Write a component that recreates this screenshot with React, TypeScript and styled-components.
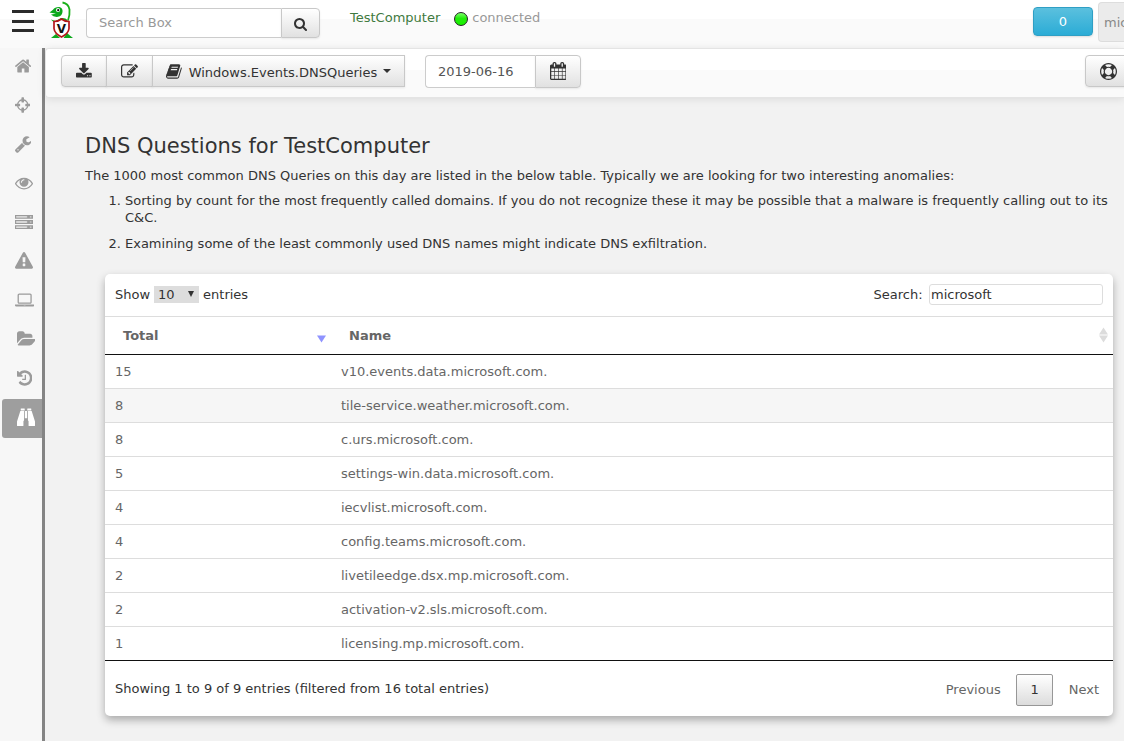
import React from "react";
import styled, { createGlobalStyle, css } from "styled-components";

const Global = createGlobalStyle`
  * { box-sizing: border-box; }
  html, body { margin: 0; padding: 0; background: #f2f2f2; overflow: hidden; }
  body { font: 13px/17px "DejaVu Sans", sans-serif; color: #333; }
`;

type GlyphData = { box: [number, number]; d: string };

/* Each glyph is drawn on a 1792-unit em; box is [left edge, width]. */
const glyphs: Record<string, GlyphData> = {
  home: { box: [90, 1612], d: "M1472 992v480q0 26-19 45t-45 19h-384v-384h-256v384h-384q-26 0-45-19t-19-45v-480q0-1 .5-3t.5-3l575-474 575 474q1 2 1 6zm223-69l-62 74q-8 9-21 11h-3q-13 0-21-7l-692-577-692 577q-12 8-24 7-13-2-21-11l-62-74q-8-10-7-23.5t11-21.5l719-599q32-26 76-26t76 26l244 204v-195q0-14 9-23t23-9h192q14 0 23 9t9 23v408l219 182q10 8 11 21.5t-7 23.5z" },
  crosshairs: { box: [128, 1536], d: "M1325 1024h-109q-26 0-45-19t-19-45v-128q0-26 19-45t45-19h109q-32-108-112.5-188.5t-188.5-112.5v109q0 26-19 45t-45 19h-128q-26 0-45-19t-19-45v-109q-108 32-188.5 112.5t-112.5 188.5h109q26 0 45 19t19 45v128q0 26-19 45t-45 19h-109q32 108 112.5 188.5t188.5 112.5v-109q0-26 19-45t45-19h128q26 0 45 19t19 45v109q108-32 188.5-112.5t112.5-188.5zm339-192v128q0 26-19 45t-45 19h-143q-37 161-154.5 278.5t-278.5 154.5v143q0 26-19 45t-45 19h-128q-26 0-45-19t-19-45v-143q-161-37-278.5-154.5t-154.5-278.5h-143q-26 0-45-19t-19-45v-128q0-26 19-45t45-19h143q37-161 154.5-278.5t278.5-154.5v-143q0-26 19-45t45-19h128q26 0 45 19t19 45v143q161 37 278.5 154.5t154.5 278.5h143q26 0 45 19t19 45z" },
  wrench: { box: [85, 1641], d: "M448 1472q0-26-19-45t-45-19-45 19-19 45 19 45 45 19 45-19 19-45zm644-420l-682 682q-37 37-90 37-52 0-91-37l-106-108q-38-36-38-90 0-53 38-91l681-681q39 98 114.5 173.5t173.5 114.5zm634-435q0 39-23 106-47 134-164.5 217.5t-258.5 83.5q-185 0-316.5-131.5t-131.5-316.5 131.5-316.5 316.5-131.5q58 0 121.5 16.5t107.5 46.5q16 11 16 28t-16 28l-293 169v224l193 107q5-3 79-48.5t135.5-81 70.5-35.5q15 0 23.5 10t8.5 25z" },
  eye: { box: [0, 1792], d: "M1664 960q-152-236-381-353 61 104 61 225 0 185-131.5 316.5t-316.5 131.5-316.5-131.5-131.5-316.5q0-121 61-225-229 117-381 353 133 205 333.5 326.5t434.5 121.5 434.5-121.5 333.5-326.5zm-720-384q0-20-14-34t-34-14q-125 0-214.5 89.5t-89.5 214.5q0 20 14 34t34 14 34-14 14-34q0-86 61-147t147-61q20 0 34-14t14-34zm848 384q0 34-20 69-140 230-376.5 368.5t-499.5 138.5-499.5-139-376.5-368q-20-35-20-69t20-69q140-229 376.5-368t499.5-139 499.5 139 376.5 368q20 35 20 69z" },
  server: { box: [0, 1792], d: "M0 192h1792v384H0zM128 336v96h1024v-96zM0 704h1792v384H0zM128 848v96h1024v-96zM0 1216h1792v384H0zM128 1360v96h1024v-96z" },
  warning: { box: [0, 1792], d: "M1024 1375v-190q0-14-9.5-23.5t-22.5-9.5h-192q-13 0-22.5 9.5t-9.5 23.5v190q0 14 9.5 23.5t22.5 9.5h192q13 0 22.5-9.5t9.5-23.5zm-2-374l18-459q0-12-10-19-13-11-24-11h-220q-11 0-24 11-10 7-10 21l17 457q0 10 10 16.5t24 6.5h185q14 0 23.5-6.5t10.5-16.5zm-14-934l768 1408q35 63-2 126-17 29-46.5 46t-63.5 17h-1536q-34 0-63.5-17t-46.5-46q-37-63-2-126l768-1408q17-31 47-49t65-18 65 18 47 49z" },
  laptop: { box: [0, 1920], d: "M416 1280q-66 0-113-47t-47-113v-704q0-66 47-113t113-47h1088q66 0 113 47t47 113v704q0 66-47 113t-113 47h-1088zm-32-864v704q0 13 9.5 22.5t22.5 9.5h1088q13 0 22.5-9.5t9.5-22.5v-704q0-13-9.5-22.5t-22.5-9.5h-1088q-13 0-22.5 9.5t-9.5 22.5zm1376 928h160v96q0 40-47 68t-113 28h-1600q-66 0-113-28t-47-68v-96h1760zm-720 96q16 0 16-16t-16-16h-160q-16 0-16 16t16 16h160z" },
  folder: { box: [0, 1880], d: "M1879 952q0 31-31 66l-336 396q-43 51-120.5 86.5t-143.5 35.5h-1088q-34 0-60.5-13t-26.5-43q0-31 31-66l336-396q43-51 120.5-86.5t143.5-35.5h1088q34 0 60.5 13t26.5 43zm-343-344v160h-832q-94 0-197 47.5t-164 119.5l-337 396-5 6q0-4-.5-12.5t-.5-12.5v-960q0-92 66-158t158-66h320q92 0 158 66t66 158v32h544q92 0 158 66t66 158z" },
  history: { box: [128, 1536], d: "M1664 896q0 156-61 298t-164 245-245 164-298 61q-172 0-327-72.5t-264-204.5q-7-10-6.5-22.5t8.5-20.5l137-138q10-9 25-9 16 2 23 12 73 95 179 147t225 52q104 0 198.5-40.5t163.5-109.5 109.5-163.5 40.5-198.5-40.5-198.5-109.5-163.5-163.5-109.5-198.5-40.5q-98 0-188 35.5t-160 101.5l137 138q31 30 14 69-17 40-59 40h-448q-26 0-45-19t-19-45v-448q0-42 40-59 39-17 69 14l130 129q107-101 244.5-156.5t284.5-55.5q156 0 298 61t245 164 164 245 61 298zm-640-288v448q0 14-9 23t-23 9h-320q-14 0-23-9t-9-23v-64q0-14 9-23t23-9h224v-352q0-14 9-23t23-9h64q14 0 23 9t9 23z" },
  binoculars: { box: [0, 1792], d: "M400 40h340q28 0 28 28v176H372V68q0-28 28-28zM1052 40h340q28 0 28 28v176h-396V68q0-28 28-28zM330 310h374v910q0 36-36 60l-28 40v420q0 52-52 52H52q-52 0-52-52v-400zM1088 310h374l330 1030v400q0 52-52 52h-536q-52 0-52-52v-420l-28-40q-36-24-36-60zM784 310h224v720H784z" },
  download: { box: [64, 1664], d: "M1344 1344q0-26-19-45t-45-19-45 19-19 45 19 45 45 19 45-19 19-45zm256 0q0-26-19-45t-45-19-45 19-19 45 19 45 45 19 45-19 19-45zm128-224v320q0 40-28 68t-68 28h-1472q-40 0-68-28t-28-68v-320q0-40 28-68t68-28h465l135 136q58 56 136 56t136-56l136-136h464q40 0 68 28t28 68zm-325-569q17 41-14 70l-448 448q-18 19-45 19t-45-19l-448-448q-31-29-14-70 17-39 59-39h256v-448q0-26 19-45t45-19h256q26 0 45 19t19 45v448h256q42 0 59 39z" },
  edit: { box: [0, 1784], d: "M888 1184l116-116-152-152-116 116v56h96v96h56zm440-720q-16-16-33 1l-350 350q-17 17-1 33t33-1l350-350q17-17 1-33zm80 594v190q0 119-84.5 203.5t-203.5 84.5h-832q-119 0-203.5-84.5t-84.5-203.5v-832q0-119 84.5-203.5t203.5-84.5h832q63 0 117 25 15 7 18 23 3 17-9 29l-49 49q-14 14-32 8-23-6-45-6h-832q-66 0-113 47t-47 113v832q0 66 47 113t113 47h832q66 0 113-47t47-113v-126q0-13 9-22l64-64q15-15 35-7t20 29zm-96-738l288 288-672 672h-288v-288zm444 132l-92 92-288-288 92-92q28-28 68-28t68 28l152 152q28 28 28 68t-28 68z" },
  book: { box: [64, 1670], d: "M1703 478q40 57 18 129l-275 906q-19 64-76.5 107.5t-122.5 43.5h-923q-77 0-148.5-53.5t-99.5-131.5q-24-67-2-127 0-4 3-27t4-37q1-8-3-21.5t-3-19.5q2-11 8-21t16.5-23.5 16.5-23.5q23-38 45-91.5t30-91.5q3-10 .5-30t-.5-28q3-11 17-28t17-23q21-36 42-92t25-90q1-9-2.5-32t.5-28q4-13 22-30.5t22-22.5q19-26 42.5-84.5t27.5-96.5q1-8-3-25.5t-2-26.5q2-8 9-18t18-23 17-21q8-12 16.5-30.5t15-35 16-36 19.5-32 26.5-23.5 36-11.5 47.5 5.5l-1 3q38-9 51-9h761q74 0 114 56t18 130l-274 906q-36 119-71.5 153.5t-128.5 34.5h-869q-27 0-38 15-11 16-1 43 24 70 144 70h923q29 0 56-15.5t35-41.5l300-987q7-22 5-57 38 15 59 43zm-1064 2q-4 13 2 22.5t20 9.5h608q13 0 25.5-9.5t16.5-22.5l21-64q4-13-2-22.5t-20-9.5h-608q-13 0-25.5 9.5t-16.5 22.5zm-83 256q-4 13 2 22.5t20 9.5h608q13 0 25.5-9.5t16.5-22.5l21-64q4-13-2-22.5t-20-9.5h-608q-13 0-25.5 9.5t-16.5 22.5z" },
  calendar: { box: [64, 1664], d: "M192 1664h288v-288h-288v288zm352 0h320v-288h-320v288zm-352-352h288v-320h-288v320zm352 0h320v-320h-320v320zm-352-384h288v-288h-288v288zm736 736h320v-288h-320v288zm-384-736h320v-288h-320v288zm768 736h288v-288h-288v288zm-384-352h320v-320h-320v320zm-352-864v-288q0-13-9.5-22.5t-22.5-9.5h-64q-13 0-22.5 9.5t-9.5 22.5v288q0 13 9.5 22.5t22.5 9.5h64q13 0 22.5-9.5t9.5-22.5zm736 864h288v-320h-288v320zm-384-384h320v-288h-320v288zm384 0h288v-288h-288v288zm32-480v-288q0-13-9.5-22.5t-22.5-9.5h-64q-13 0-22.5 9.5t-9.5 22.5v288q0 13 9.5 22.5t22.5 9.5h64q13 0 22.5-9.5t9.5-22.5zm384-64v1280q0 52-38 90t-90 38h-1408q-52 0-90-38t-38-90v-1280q0-52 38-90t90-38h128v-96q0-66 47-113t113-47h64q66 0 113 47t47 113v96h384v-96q0-66 47-113t113-47h64q66 0 113 47t47 113v96h128q52 0 90 38t38 90z" },
  ring: { box: [0, 1792], d: "M896 0q182 0 348 71t286 191 191 286 71 348-71 348-191 286-286 191-348 71-348-71-286-191-191-286-71-348 71-348 191-286 286-191 348-71zm0 128q-190 0-361 90l194 194q82-28 167-28t167 28l194-194q-171-90-361-90zm-678 1129l194-194q-28-82-28-167t28-167l-194-194q-90 171-90 361t90 361zm678 407q190 0 361-90l-194-194q-82 28-167 28t-167-28l-194 194q171 90 361 90zm0-384q159 0 271.5-112.5t112.5-271.5-112.5-271.5-271.5-112.5-271.5 112.5-112.5 271.5 112.5 271.5 271.5 112.5zm484-217l194 194q90-171 90-361t-90-361l-194 194q28 82 28 167t-28 167z" },
  search: { box: [64, 1664], d: "M1216 832q0-185-131.5-316.5t-316.5-131.5-316.5 131.5-131.5 316.5 131.5 316.5 316.5 131.5 316.5-131.5 131.5-316.5zm512 832q0 52-38 90t-90 38q-54 0-90-38l-343-342q-179 124-399 124-143 0-273.5-55.5t-225-150-150-225-55.5-273.5 55.5-273.5 150-225 225-150 273.5-55.5 273.5 55.5 225 150 150 225 55.5 273.5q0 220-124 399l343 343q37 37 37 90z" },
};

const Svg = styled.svg`
  display: block;
  flex: none;
  fill: currentColor;
`;

function Glyph({ name, size = 18 }: { name: string; size?: number }) {
  const { box, d } = glyphs[name];
  return (
    <Svg width={(box[1] * size) / 1792} height={size} viewBox={`${box[0]} 0 ${box[1]} 1792`}>
      <path fillRule={name === "server" ? "evenodd" : "nonzero"} d={d} />
      {name === "server" && <path fill="#dcdcdc" d="M128 320h1088v128H128zM128 832h1088v128H128zM128 1344h1088v128H128zM1480 330h160v110h-160zM1480 840h160v110h-160zM1480 1350h160v110h-160z" />}
    </Svg>
  );
}

const Page = styled.div`
  display: flex;
  flex-direction: column;
  width: 1124px;
  height: 741px;
  overflow: hidden;
`;

const Navbar = styled.header`
  display: flex;
  flex: none;
  align-items: flex-start;
  height: 48px;
  background: linear-gradient(#fff 19px, #fafafa 19px);
`;

const Burger = styled.div`
  display: flex;
  flex-direction: column;
  gap: 6.5px;
  margin: 10px 0 0 12px;
  width: 22px;
`;

const Bar = styled.span`
  height: 3px;
  background: #2b2b2b;
`;

const Logo = styled.svg`
  display: block;
  flex: none;
  width: 26px;
  height: 38px;
  margin: 1px 11px 0 15px;
`;

const gradientFace = css`
  background: linear-gradient(#fff, #e1e1e1);
  border: 1px solid #c8c8c8;
  box-shadow: inset 0 1px 0 rgba(255, 255, 255, 0.3), 0 1px 2px rgba(0, 0, 0, 0.08);
`;

const SearchGroup = styled.div`
  display: flex;
  width: 234px;
  height: 30px;
  margin-top: 8px;
`;

const Field = styled.div<{ $width: number; $color: string }>`
  display: flex;
  align-items: center;
  flex: none;
  width: ${(p) => p.$width}px;
  padding: 0 12px 1px;
  background: #fff;
  color: ${(p) => p.$color};
  border: 1px solid #ccc;
  border-right: 0;
  border-radius: 4px 0 0 4px;
`;

const Button = styled.div<{ $width: number; $shape?: "left" | "right" | "mid"; $drop?: number; $lift?: number }>`
  ${gradientFace}
  display: flex;
  align-items: center;
  justify-content: center;
  flex: none;
  width: ${(p) => p.$width}px;
  margin-left: ${(p) => (p.$shape === "mid" ? "-1px" : 0)};
  padding: ${(p) => p.$drop ?? 0}px 0 ${(p) => p.$lift ?? 0}px;
  border-radius: ${(p) => (p.$shape === "left" ? "4px 0 0 4px" : p.$shape === "right" ? "0 4px 4px 0" : 0)};
  color: #333;
`;

const Client = styled.div`
  display: flex;
  align-items: center;
  margin: 9px 0 0 30px;
  color: #999;
`;

const ClientName = styled.span`
  color: #3f7a40;
`;

const StatusDot = styled.span`
  width: 14px;
  height: 14px;
  margin: 3px 4px 0 14px;
  border: 1px solid #222;
  border-radius: 50%;
  background: linear-gradient(#7dff6d 0, #22ee0a 45%, #18f000);
`;

const Notifications = styled.div`
  display: flex;
  align-items: center;
  justify-content: center;
  width: 60px;
  height: 29px;
  margin: 7px 5px 0 auto;
  border: 1px solid #2f9fc4;
  border-radius: 4px;
  background: linear-gradient(#5bc0de, #2bacd6);
  box-shadow: 0 1px 2px rgba(0, 0, 0, 0.12);
  color: #fff;
`;

const User = styled.div`
  display: flex;
  align-items: center;
  width: 26px;
  height: 40px;
  margin-top: 2px;
  padding-left: 5px;
  overflow: hidden;
  border: 1px solid #ddd;
  border-right: 0;
  border-radius: 4px 0 0 4px;
  background: #ebebeb;
  color: #888;
`;

const Body = styled.div`
  display: flex;
  flex: 1;
  min-height: 0;
`;

const Sidebar = styled.nav`
  flex: none;
  width: 45px;
  padding-left: 2px;
  border-right: 3px solid #848484;
  background: #f7f7f7;
`;

const SideItem = styled.div<{ $indent: number; $active?: boolean }>`
  display: flex;
  align-items: center;
  height: 39px;
  padding: 0 0 3px ${(p) => p.$indent}px;
  border-radius: 3px 0 0 3px;
  background: ${(p) => (p.$active ? "#9e9e9e" : "transparent")};
  color: ${(p) => (p.$active ? "#fff" : "#9b9b9b")};
`;

const Main = styled.main`
  flex: 1;
  min-width: 0;
`;

const Toolbar = styled.div`
  display: flex;
  height: 50px;
  padding: 6px 0 0 15px;
  border: 1px solid #e4e4e4;
  border-width: 1px 0 1px 1px;
  border-radius: 4px 0 0 4px;
  background: linear-gradient(#fff 21px, #fafafa 21px);
  box-shadow: 0 1px 8px rgba(0, 0, 0, 0.1);
`;

const ButtonRow = styled.div<{ $gap?: number }>`
  display: flex;
  height: ${(p) => (p.$gap ? 33 : 32)}px;
  margin-left: ${(p) => p.$gap ?? 0}px;
`;

/* The help button runs past the right edge of the window. */
const HelpRow = styled(ButtonRow)`
  margin-left: auto;
  margin-right: -7px;
`;

const ArtifactName = styled.span`
  margin: 3px 6px 0 7px;
`;

const Caret = styled.span`
  border: 4px solid transparent;
  border-top-color: #333;
  border-bottom: 0;
`;

const Report = styled.article`
  padding: 36px 11px 0 40px;
`;

const Title = styled.h3`
  margin: 0 0 9px;
  font-size: 21px;
  font-weight: 400;
  line-height: 24px;
`;

const Paragraph = styled.p`
  margin: 0 0 8px;
`;

const Notes = styled.ol`
  margin: 0 0 22px;
  padding-left: 40px;
`;

const Note = styled.li`
  margin-bottom: 9px;
  & + & { margin-bottom: 0; }
`;

const Card = styled.section`
  margin-left: 20px;
  height: 442px;
  border-radius: 5px;
  background: #fff;
  box-shadow: 0 4px 8px rgba(0, 0, 0, 0.3);
`;

const Controls = styled.div`
  display: flex;
  align-items: center;
  justify-content: space-between;
  height: 42px;
  padding: 0 10px 2px;
`;

const Inline = styled.div`
  display: flex;
  align-items: center;
`;

const PageSize = styled.span`
  display: flex;
  align-items: center;
  justify-content: space-between;
  width: 45px;
  height: 17px;
  margin: 0 4px;
  padding: 0 5px 0 4px;
  background: #ddd;
`;

const SelectArrow = styled.span`
  margin-bottom: 1px;
  border: 3.5px solid transparent;
  border-top: 6px solid #333;
  border-bottom: 0;
`;

const Filter = styled.span`
  width: 174px;
  height: 21px;
  margin-left: 6.4px;
  padding: 1px;
  border: 1px solid #ddd;
  border-radius: 3px;
`;

const Grid = styled.div`
  border-bottom: 1px solid #111;
`;

const Row = styled.div<{ $shaded?: boolean }>`
  display: grid;
  grid-template-columns: 226px 1fr;
  height: 34px;
  border-top: 1px solid #ddd;
  background: ${(p) => (p.$shaded ? "#f6f6f6" : "#fff")};
  color: #666;
`;

const HeadRow = styled(Row)`
  height: 39px;
  border-bottom: 1px solid #111;
  font-weight: 700;
  & + ${Row} { height: 33px; border-top: 0; }
`;

const Cell = styled.div`
  padding: 8px 10px 0;
`;

const HeadCell = styled.div`
  display: flex;
  align-items: center;
  justify-content: space-between;
  padding: 0 5px 0 18px;
`;

const SortMark = styled.svg`
  width: 9px;
  height: 16px;
  margin-bottom: 1px;
`;

const Footer = styled.footer`
  display: flex;
  align-items: center;
  justify-content: space-between;
  height: 55px;
  padding: 0 14px 0 10px;
`;

const Pager = styled.div`
  display: flex;
  align-items: center;
  gap: 15.5px;
  margin-top: 2px;
  color: #666;
`;

const PageNumber = styled.span`
  display: flex;
  align-items: center;
  justify-content: center;
  width: 37px;
  height: 32px;
  border: 1px solid #979797;
  border-radius: 2px;
  background: linear-gradient(#fff, #dcdcdc);
  color: #333;
`;

const sideItems: [string, number][] = [
  ["home", 13.3], ["crosshairs", 12.7], ["wrench", 13], ["eye", 13], ["server", 13],
  ["warning", 13], ["laptop", 13], ["folder", 14.6], ["history", 15],
];

const records: [number, string][] = [
  [15, "v10.events.data.microsoft.com."],
  [8, "tile-service.weather.microsoft.com."],
  [8, "c.urs.microsoft.com."],
  [5, "settings-win.data.microsoft.com."],
  [4, "iecvlist.microsoft.com."],
  [4, "config.teams.microsoft.com."],
  [2, "livetileedge.dsx.mp.microsoft.com."],
  [2, "activation-v2.sls.microsoft.com."],
  [1, "licensing.mp.microsoft.com."],
];

function LizardLogo() {
  return (
    <Logo viewBox="0 0 26 38">
      <path d="M13.500 1.500q6 1 7 7 .5 6-1.500 11" fill="none" stroke="#1ab01a" strokeWidth="1.800" />
      <path d="M.5 11.500l3.500-2.800q2-3 6.500-2.700 3.500 1 3 5-.5 4-4.500 4.800-4.500.5-7-2.300l5-.7z" fill="#0ca81c" />
      <path d="M2 18.500l4.500 1.500 5.500-3q4.500-.5 6.500 2l-2 4H6.500zM2 36.900l5-3.900 4 3.900zM14.500 36.900l3.500-4.900 3.500 3 2.500 1.900z" fill="#0ca81c" />
      <circle cx="9" cy="9" r="2" fill="#fff" />
      <circle cx="9.200" cy="9.200" r="1.100" fill="#111" />
      <path d="M12.500 18q3 2.500 7.500 2.500v7q-.5 5-7.500 8.500-7-3.500-7.500-8.500v-7q4.500 0 7.500-2.500z" fill="#fff" stroke="#b5151a" strokeWidth="1.700" />
      <text x="12.500" y="31.500" textAnchor="middle" fontFamily="DejaVu Sans, sans-serif" fontSize="12" fontWeight="700" fill="#111">V</text>
    </Logo>
  );
}

export default function App() {
  return (
    <Page>
      <Global />
      <Navbar>
        <Burger><Bar /><Bar /><Bar /></Burger>
        <LizardLogo />
        <SearchGroup>
          <Field $width={195} $color="#999">Search Box</Field>
          <Button $width={39} $shape="right" $drop={2}><Glyph name="search" size={14} /></Button>
        </SearchGroup>
        <Client>
          <ClientName>TestComputer</ClientName>
          <StatusDot />
          connected
        </Client>
        <Notifications>0</Notifications>
        <User>mic</User>
      </Navbar>
      <Body>
        <Sidebar>
          {sideItems.map(([name, indent]) => (
            <SideItem key={name} $indent={indent}><Glyph name={name} /></SideItem>
          ))}
          <SideItem $indent={15} $active><Glyph name="binoculars" /></SideItem>
        </Sidebar>
        <Main>
          <Toolbar>
            <ButtonRow>
              <Button $width={46} $shape="left"><Glyph name="download" size={17} /></Button>
              <Button $width={47} $shape="mid"><Glyph name="edit" size={17} /></Button>
              <Button $width={253} $shape="mid">
                <Glyph name="book" size={17} />
                <ArtifactName>Windows.Events.DNSQueries</ArtifactName>
                <Caret />
              </Button>
            </ButtonRow>
            <ButtonRow $gap={20}>
              <Field $width={110} $color="#555">2019-06-16</Field>
              <Button $width={46} $shape="right" $lift={2}><Glyph name="calendar" /></Button>
            </ButtonRow>
            <HelpRow>
              <Button $width={46} $shape="left"><Glyph name="ring" size={17} /></Button>
            </HelpRow>
          </Toolbar>
          <Report>
            <Title>DNS Questions for TestComputer</Title>
            <Paragraph>
              The 1000 most common DNS Queries on this day are listed in the below table. Typically we are looking for two interesting anomalies:
            </Paragraph>
            <Notes>
              <Note>Sorting by count for the most frequently called domains. If you do not recognize these it may be possible that a malware is frequently calling out to its C&amp;C.</Note>
              <Note>Examining some of the least commonly used DNS names might indicate DNS exfiltration.</Note>
            </Notes>
            <Card>
              <Controls>
                <Inline>Show<PageSize>10<SelectArrow /></PageSize>entries</Inline>
                <Inline>Search:<Filter>microsoft</Filter></Inline>
              </Controls>
              <Grid>
                <HeadRow>
                  <HeadCell>Total<SortMark viewBox="0 0 9 16"><path d="M0 8.500h9l-4.500 7z" fill="#8f93ff" /></SortMark></HeadCell>
                  <HeadCell>Name<SortMark viewBox="0 0 9 16"><path d="M0 7.500h9l-4.500-7zM0 8.500h9l-4.500 7z" fill="#dcdcdc" /></SortMark></HeadCell>
                </HeadRow>
                {records.map(([total, name], i) => (
                  <Row key={name} $shaded={i === 1}><Cell>{total}</Cell><Cell>{name}</Cell></Row>
                ))}
              </Grid>
              <Footer>
                <span>Showing 1 to 9 of 9 entries (filtered from 16 total entries)</span>
                <Pager><span>Previous</span><PageNumber>1</PageNumber><span>Next</span></Pager>
              </Footer>
            </Card>
          </Report>
        </Main>
      </Body>
    </Page>
  );
}
